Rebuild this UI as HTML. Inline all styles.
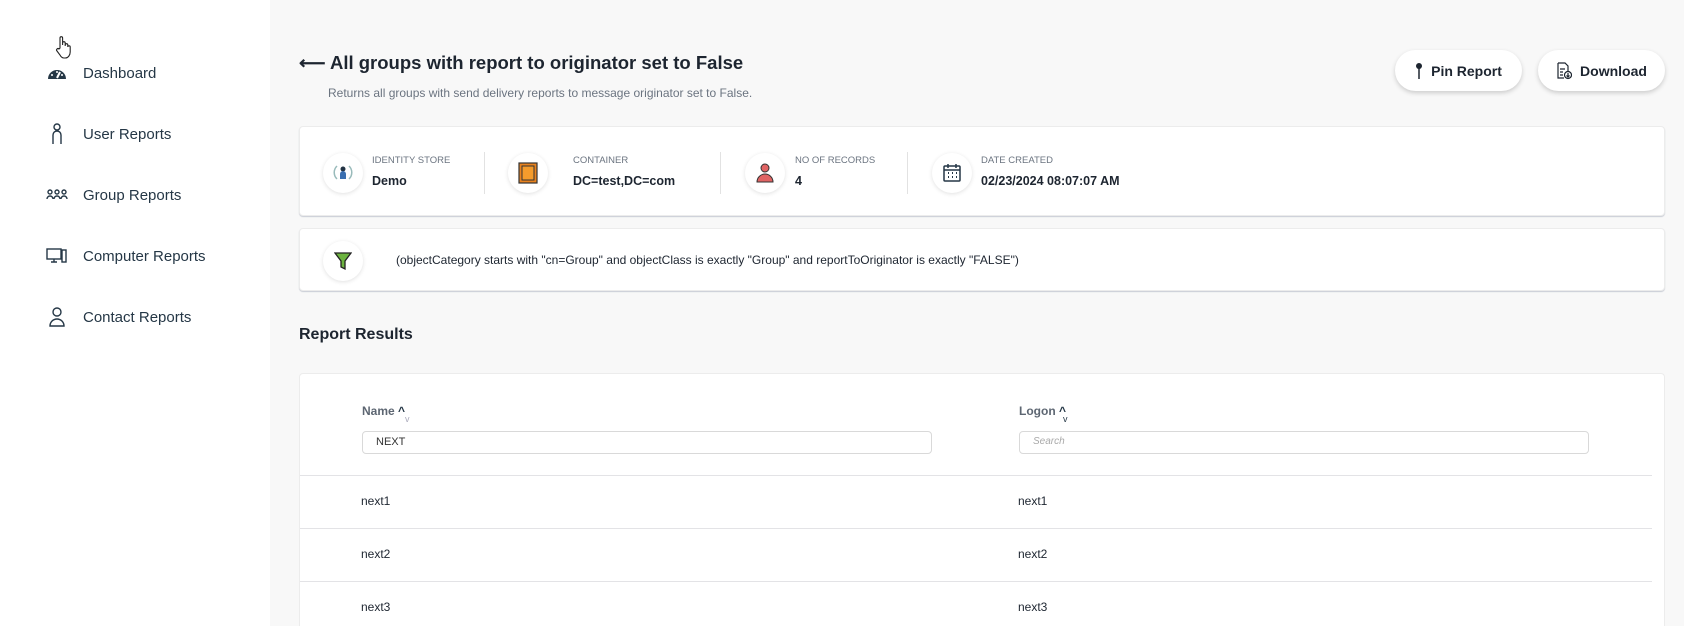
<!DOCTYPE html>
<html><head><meta charset="utf-8"><style>
*{box-sizing:border-box;margin:0;padding:0}
html,body{width:1684px;height:626px;overflow:hidden}
body{background:#f8f8f8;font-family:"Liberation Sans",sans-serif;color:#1d2530;position:relative}
.side{position:absolute;left:0;top:0;width:270px;height:626px;background:#fff}
.nav{position:absolute;left:46px;display:flex;align-items:center;font-size:15px;color:#253746}
.nav svg{width:22px;height:22px;margin-right:15px}
.abs{position:absolute}
h1{position:absolute;left:299px;top:52px;font-size:18.5px;font-weight:bold;color:#1d2530}
.sub{position:absolute;left:328px;top:86px;font-size:12px;color:#6b7480}
.btn{position:absolute;top:50px;height:41px;background:#fff;border-radius:21px;box-shadow:0 2px 5px rgba(0,0,0,.18);font-size:14px;font-weight:bold;display:flex;align-items:center;justify-content:center;gap:8px}
.card{position:absolute;left:299px;width:1366px;background:#fff;border:1px solid #ececec;border-radius:4px;box-shadow:0 1px 1px #c8ccd4}
.ic{position:absolute;width:40px;height:40px;border-radius:50%;background:#fff;box-shadow:0 1px 4px rgba(0,0,0,.12);display:flex;align-items:center;justify-content:center}
.lb{position:absolute;font-size:9.5px;color:#6b7480;top:28px}
.vl{position:absolute;font-size:12.5px;font-weight:bold;top:47px}
.dv{position:absolute;top:25px;width:1px;height:42px;background:#e2e2e2}
.th{position:absolute;top:30px;font-size:12px;font-weight:bold;color:#5d6672}
.inp{position:absolute;top:57px;height:23px;border:1px solid #d9d9d9;border-radius:4px;font-size:11px;padding:4px 13px}
.row{position:absolute;left:0;width:1352px;border-top:1px solid #e3e3e6}
.cell{position:absolute;font-size:12px;color:#1d2530}
</style></head><body>
<div class="side">
 <svg class="abs" style="left:55px;top:35px" width="16" height="24" viewBox="0 0 16 24" fill="#fff" stroke="#222" stroke-width="1.1"><path d="M5 13V3a1.3 1.3 0 0 1 2.6 0v7V8a1.3 1.3 0 0 1 2.6 0v3-1a1.3 1.3 0 0 1 2.6 0v2a1.2 1.2 0 0 1 2.4 0v5c0 3-2 6-5 6H9c-2 0-3-1-4-3l-3-4a1.3 1.3 0 0 1 2-2z"/></svg>
 <div class="nav" style="top:62px"><svg viewBox="0 0 22 22"><path d="M2 17a9 9 0 0 1 18 0z" fill="#253746"/><path d="M11 16l3-6" stroke="#fff" stroke-width="2"/><circle cx="6" cy="13" r="1" fill="#fff"/><circle cx="16" cy="13" r="1" fill="#fff"/><circle cx="11" cy="10" r="1" fill="#fff"/></svg>Dashboard</div>
 <div class="nav" style="top:123px"><svg viewBox="0 0 22 22" fill="none" stroke="#253746" stroke-width="1.4"><circle cx="11" cy="4" r="3"/><path d="M7 21v-9a4 4 0 0 1 8 0v9"/></svg>User Reports</div>
 <div class="nav" style="top:184px"><svg viewBox="0 0 22 22" fill="none" stroke="#253746" stroke-width="1.4"><circle cx="4" cy="8" r="2"/><circle cx="11" cy="8" r="2"/><circle cx="18" cy="8" r="2"/><path d="M1 15a3 3 0 0 1 6 0M8 15a3 3 0 0 1 6 0M15 15a3 3 0 0 1 6 0"/></svg>Group Reports</div>
 <div class="nav" style="top:245px"><svg viewBox="0 0 22 22" fill="none" stroke="#253746" stroke-width="1.4"><rect x="1" y="4" width="14" height="10"/><path d="M8 14v3M5 17h6"/><rect x="16" y="5" width="4" height="12"/></svg>Computer Reports</div>
 <div class="nav" style="top:306px"><svg viewBox="0 0 22 22" fill="none" stroke="#253746" stroke-width="1.4"><circle cx="11" cy="6" r="4"/><path d="M4 20a7 7 0 0 1 14 0z"/></svg>Contact Reports</div>
</div>
<h1>⟵ All groups with report to originator set to False</h1>
<div class="sub">Returns all groups with send delivery reports to message originator set to False.</div>
<div class="btn" style="left:1395px;width:127px"><svg width="8" height="18" viewBox="0 0 8 18"><circle cx="4" cy="4" r="3" fill="#1d2530"/><path d="M4 6v11" stroke="#1d2530" stroke-width="1.5"/></svg>Pin Report</div>
<div class="btn" style="left:1538px;width:127px"><svg width="16" height="18" viewBox="0 0 16 18" fill="none" stroke="#1d2530" stroke-width="1.2"><path d="M2 1h7l3 3v5M2 1v15h6"/><path d="M4 7h5M4 10h3M4 13h3"/><circle cx="12" cy="13" r="3.5"/><path d="M12 11v4M10.5 13.5l1.5 1.5 1.5-1.5"/></svg>Download</div>

<div class="card" style="top:126px;height:90px">
 <div class="ic" style="left:23px;top:26px"><svg width="20" height="22" viewBox="0 0 20 22"><path d="M4 4a9 9 0 0 0 0 13M16 4a9 9 0 0 1 0 13" stroke="#9bb" fill="none" stroke-width="1.5"/><circle cx="10" cy="7" r="2.5" fill="#234"/><path d="M7 17v-5a3 3 0 0 1 6 0v5z" fill="#3a6fb0"/></svg></div>
 <div class="lb" style="left:72px">IDENTITY STORE</div><div class="vl" style="left:72px">Demo</div>
 <div class="dv" style="left:184px"></div>
 <div class="ic" style="left:208px;top:26px"><svg width="20" height="22" viewBox="0 0 20 22"><rect x="1" y="1" width="18" height="20" fill="#e8821e" stroke="#333" stroke-width="1.2"/><rect x="4" y="4" width="12" height="14" fill="#f49b2c" stroke="#333" stroke-width="1"/></svg></div>
 <div class="lb" style="left:273px">CONTAINER</div><div class="vl" style="left:273px">DC=test,DC=com</div>
 <div class="dv" style="left:420px"></div>
 <div class="ic" style="left:445px;top:26px"><svg width="20" height="22" viewBox="0 0 20 22"><circle cx="10" cy="6" r="4" fill="#e06464" stroke="#333"/><path d="M2 20a8 8 0 0 1 16 0z" fill="#e06464" stroke="#333"/></svg></div>
 <div class="lb" style="left:495px">NO OF RECORDS</div><div class="vl" style="left:495px">4</div>
 <div class="dv" style="left:607px"></div>
 <div class="ic" style="left:632px;top:26px"><svg width="20" height="20" viewBox="0 0 20 20" fill="none" stroke="#253746" stroke-width="1.5"><rect x="2" y="3" width="16" height="15" rx="1"/><path d="M2 7h16M6 1v4M14 1v4"/><path d="M6 10h1M10 10h1M14 10h1M6 14h1M10 14h1M14 14h1" stroke-width="2"/></svg></div>
 <div class="lb" style="left:681px">DATE CREATED</div><div class="vl" style="left:681px">02/23/2024 08:07:07 AM</div>
</div>

<div class="card" style="top:228px;height:63px">
 <div class="ic" style="left:23px;top:12px"><svg width="18" height="20" viewBox="0 0 18 20"><path d="M1 2h16l-6 8v8l-4-2v-6z" fill="#6cb33f" stroke="#222" stroke-width="1.3"/></svg></div>
 <div class="abs" style="left:96px;top:24px;font-size:12px">(objectCategory starts with "cn=Group" and objectClass is exactly "Group" and reportToOriginator is exactly "FALSE")</div>
</div>

<div class="abs" style="left:299px;top:326px;font-size:16px;font-weight:bold">Report Results</div>

<div class="card" style="top:373px;height:253px;box-shadow:none;border-bottom:none;border-radius:4px 4px 0 0">
 <div class="th" style="left:62px">Name <span style="color:#253746">^</span></div>
 <div class="abs" style="left:105px;top:40px;font-size:9px;color:#aab">v</div>
 <div class="inp" style="left:62px;width:570px;color:#333">NEXT</div>
 <div class="th" style="left:719px">Logon <span style="color:#253746">^</span></div>
 <div class="abs" style="left:763px;top:40px;font-size:9px;color:#253746">v</div>
 <div class="inp" style="left:719px;width:570px;color:#aaa;font-style:italic;font-size:10px">Search</div>
 <div class="row" style="top:101px"></div>
 <div class="row" style="top:154px"></div>
 <div class="row" style="top:207px"></div>
 <div class="cell" style="left:61px;top:120px">next1</div><div class="cell" style="left:718px;top:120px">next1</div>
 <div class="cell" style="left:61px;top:173px">next2</div><div class="cell" style="left:718px;top:173px">next2</div>
 <div class="cell" style="left:61px;top:226px">next3</div><div class="cell" style="left:718px;top:226px">next3</div>
</div>
</body></html>
